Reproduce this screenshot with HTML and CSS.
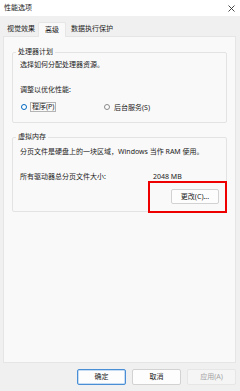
FILE: index.html
```html
<!DOCTYPE html>
<html lang="zh-CN">
<head>
<meta charset="utf-8">
<title>性能选项</title>
<link rel="stylesheet" href="styles.css">
</head>
<body>
<div class="window">
  <div class="titlebar">
    <span class="title">性能选项</span>
    <svg class="close" width="7" height="7" viewBox="0 0 7 7"><path d="M0.5 0.5 L6.5 6.5 M6.5 0.5 L0.5 6.5" stroke="#333" stroke-width="0.9" fill="none"/></svg>
  </div>
  <div class="tabs">
    <div class="tab tab-first">视觉效果</div>
    <div class="tab tab-active">高级</div>
    <div class="tab tab-last">数据执行保护</div>
  </div>
  <div class="panel">
    <div class="group group-cpu">
      <span class="legend">处理器计划</span>
      <div class="line">选择如何分配处理器资源。</div>
      <div class="line line-gap">调整以优化性能:</div>
      <div class="radios">
        <div class="radio-item radio-first">
          <span class="radio radio-on"></span>
          <span class="focus">程序(P)</span>
        </div>
        <div class="radio-item">
          <span class="radio"></span>
          <span class="rlabel">后台服务(S)</span>
        </div>
      </div>
    </div>
    <div class="group group-mem">
      <span class="legend">虚拟内存</span>
      <div class="line">分页文件是硬盘上的一块区域，Windows 当作 RAM 使用。</div>
      <div class="line line-gap size-row">
        <span class="size-label">所有驱动器总分页文件大小:</span>
        <span class="size-value">2048 MB</span>
      </div>
      <div class="btn-row">
        <button class="btn btn-change">更改(C)...</button>
      </div>
    </div>
  </div>
  <div class="footer">
    <button class="btn btn-foot btn-default">确定</button>
    <button class="btn btn-foot">取消</button>
    <button class="btn btn-foot btn-disabled">应用(A)</button>
  </div>
  <div class="highlight"></div>
</div>
</body>
</html>
```

FILE: styles.css
```css
* { box-sizing: border-box; }
html, body { margin: 0; padding: 0; }
body {
  width: 240px;
  height: 391px;
  overflow: hidden;
  background: #f0f0f0;
  font-family: "Noto Sans", "Noto Sans CJK SC", sans-serif;
  font-size: 7px;
  color: #1b1b1b;
}
.window {
  position: relative;
  width: 240px;
  height: 391px;
  display: flex;
  flex-direction: column;
}
.titlebar {
  height: 16px;
  background: #ffffff;
  display: flex;
  align-items: center;
  justify-content: space-between;
  padding: 0 5px 0 4px;
  flex: none;
}
.title { line-height: 10px; }
.close { display: block; }
.tabs {
  height: 20px;
  flex: none;
  display: flex;
  align-items: flex-end;
  padding-left: 4px;
  position: relative;
  z-index: 1;
}
.tab {
  height: 14px;
  line-height: 13px;
  padding: 0 3px;
  white-space: nowrap;
}
.tab-active {
  background: #f9f9f9;
  height: 15px;
  margin-bottom: -1px;
  padding: 0 6px;
  border: 1px solid #e6e6e6;
  border-bottom: none;
  border-radius: 2px 2px 0 0;
  line-height: 13px;
}
.tab-last { padding: 0 5px; }
.panel {
  flex: 1;
  margin: 0 4px 0 3px;
  background: #f9f9f9;
  border: 1px solid #e5e5e5;
  padding: 15px 8px 0 8px;
}
.group {
  position: relative;
  border: 1px solid #e3e3e3;
  border-radius: 2px;
  padding: 7px 7px 10px 7px;
}
.group-mem {
  margin-top: 14px;
  padding: 9px 7px 7px 7px;
}
.legend {
  position: absolute;
  top: -6px;
  left: 3px;
  padding: 0 2px;
  background: #f9f9f9;
  line-height: 10px;
}
.line {
  line-height: 10px;
  height: 10px;
  white-space: nowrap;
}
.line-gap { margin-top: 15px; }
.radios {
  margin-top: 7px;
  display: flex;
  height: 10px;
  align-items: center;
}
.radio-item {
  display: flex;
  align-items: center;
}
.radio-first { width: 83px; }
.radio {
  width: 6px;
  height: 6px;
  border-radius: 50%;
  border: 0.8px solid #8a8a8a;
  background: #fdfdfd;
  margin-left: 1px;
  margin-right: 3px;
}
.radio-on {
  border: 1.8px solid #0067c0;
  background: #ffffff;
}
.focus {
  display: inline-block;
  border: 1px solid #b4b4b4;
  height: 10px;
  line-height: 8px;
  padding: 0 1px;
}
.rlabel { line-height: 9px; padding-left: 1px; }
.size-row { display: flex; }
.size-label { width: 133px; }
.btn-row {
  margin-top: 7px;
  display: flex;
  justify-content: flex-end;
}
.btn {
  font-family: inherit;
  font-size: 7px;
  color: #1b1b1b;
  background: #fdfdfd;
  border: 1px solid #d2d2d2;
  border-radius: 2px;
  padding: 0;
  margin: 0;
  height: 15px;
  line-height: 13px;
}
.btn-change { width: 48px; }
.footer {
  height: 28px;
  flex: none;
  display: flex;
  justify-content: flex-end;
  gap: 6px;
  padding: 6px 4px 0 0;
}
.btn-foot { width: 49px; height: 16px; line-height: 14px; }
.btn-default {
  border: 1px solid #4a8fd6;
  box-shadow: inset 0 0 0 0.5px #8fbbe8;
}
.btn-disabled {
  color: #a3a3a3;
  background: #f5f5f5;
  border-color: #e6e6e6;
}
.highlight {
  position: absolute;
  left: 148px;
  top: 181px;
  width: 79px;
  height: 32px;
  border: 2px solid #ee0000;
  pointer-events: none;
}
```
